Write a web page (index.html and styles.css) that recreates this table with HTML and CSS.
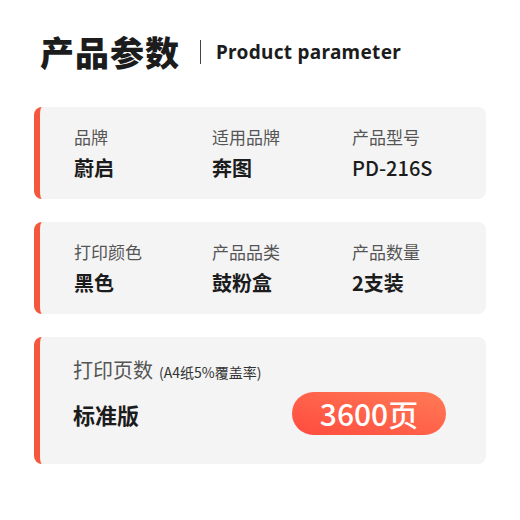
FILE: index.html
```html
<!DOCTYPE html>
<html lang="zh-CN">
<head>
  <meta charset="UTF-8" />
  <title>产品参数</title>
  <link rel="stylesheet" href="styles.css">
</head>
<body>
  <div class="page">
    <div class="header">
      <h1 class="title">产品参数</h1>
      <span class="divider"></span>
      <span class="subtitle">Product parameter</span>
    </div>

    <div class="card">
      <div class="cell">
        <div class="label">品牌</div>
        <div class="value">蔚启</div>
      </div>
      <div class="cell">
        <div class="label">适用品牌</div>
        <div class="value">奔图</div>
      </div>
      <div class="cell">
        <div class="label">产品型号</div>
        <div class="value latin">PD-216S</div>
      </div>
    </div>

    <div class="card">
      <div class="cell">
        <div class="label">打印颜色</div>
        <div class="value">黑色</div>
      </div>
      <div class="cell">
        <div class="label">产品品类</div>
        <div class="value">鼓粉盒</div>
      </div>
      <div class="cell">
        <div class="label">产品数量</div>
        <div class="value">2支装</div>
      </div>
    </div>

    <div class="card card-pages">
      <div class="label big">打印页数<span class="note">(A4纸5%覆盖率)</span></div>
      <div class="pages-row">
        <div class="value big">标准版</div>
        <div class="pill">3600页</div>
      </div>
    </div>
  </div>
</body>
</html>
```

FILE: styles.css
```css
body {
  margin: 0;
  background-color: #ffffff;
  font-family: "Noto Sans CJK SC", "Noto Sans", sans-serif;
  color: #1c1c1c;
}

.page {
  width: 520px;
  padding: 32px 34px 0;
  box-sizing: border-box;
}

.header {
  display: flex;
  align-items: center;
  height: 40px;
  padding-left: 6px;
  margin-bottom: 35px;
}

.title {
  margin: 0;
  font-size: 34px;
  font-weight: 900;
  letter-spacing: 1px;
  line-height: 40px;
  color: #1c1c1c;
}

.divider {
  width: 1px;
  height: 24px;
  background-color: #444;
  margin: 0 15px 0 20px;
}

.subtitle {
  font-family: "Noto Sans", sans-serif;
  font-size: 19px;
  font-weight: 700;
  color: #1c1c1c;
  letter-spacing: 0.3px;
}

.card {
  display: grid;
  grid-template-columns: 138px 140px 1fr;
  background-color: #f4f4f4;
  border-left: 6px solid #f4573c;
  border-radius: 8px;
  padding: 18px 0 17px 34px;
  margin-bottom: 23px;
}

.label {
  font-size: 17px;
  line-height: 24px;
  color: #555555;
}

.value {
  margin-top: 5px;
  font-size: 20px;
  line-height: 28px;
  font-weight: 700;
  color: #1c1c1c;
}

.value.latin {
  font-weight: 500;
}

.card-pages {
  display: block;
  padding: 19px 40px 29px 33px;
}

.label.big {
  font-size: 20px;
  line-height: 28px;
}

.note {
  font-size: 14px;
  margin-left: 6px;
  color: #333;
}

.pages-row {
  display: flex;
  justify-content: space-between;
  align-items: center;
  margin-top: 6px;
}

.value.big {
  margin-top: 0;
  font-size: 22px;
}

.pill {
  width: 154px;
  height: 43px;
  border-radius: 22px;
  background: linear-gradient(15deg, #ff4b3e, #ff7a56);
  color: #ffffff;
  font-size: 30px;
  font-weight: 500;
  line-height: 43px;
  text-align: center;
}
```
